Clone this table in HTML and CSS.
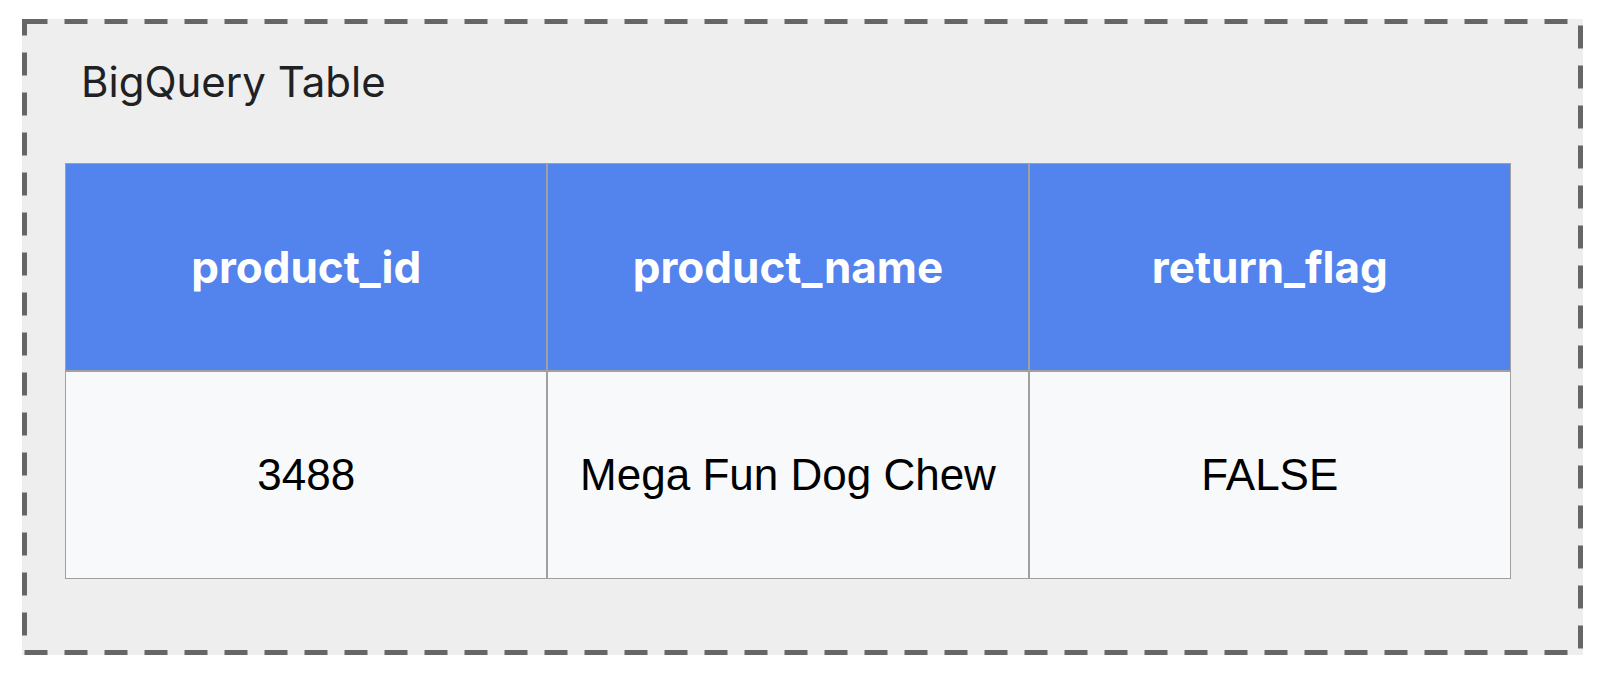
FILE: index.html
```html
<!DOCTYPE html>
<html>
<head>
<meta charset="utf-8">
<link rel="stylesheet" href="styles.css">
</head>
<body>
<div class="frame">
  <svg class="dash" width="1561" height="636" viewBox="0 0 1561 636">
    <rect x="2.5" y="2.5" width="1556" height="631" fill="none" stroke="#666666" stroke-width="5" stroke-dasharray="23 17"/>
  </svg>
  <div class="title">BigQuery Table</div>
  <div class="table">
    <div class="cell head">product_id</div>
    <div class="cell head">product_name</div>
    <div class="cell head">return_flag</div>
    <div class="cell body">3488</div>
    <div class="cell body">Mega Fun Dog Chew</div>
    <div class="cell body">FALSE</div>
  </div>
</div>
</body>
</html>
```
FILE: styles.css
```css
html, body {
  margin: 0;
  padding: 0;
  background: #ffffff;
}
.frame {
  position: relative;
  box-sizing: border-box;
  margin: 19px 0 0 22px;
  width: 1561px;
  height: 636px;
  background: #eeeeee;
  padding: 38px 0 0 43px;
}
.dash {
  position: absolute;
  left: 0;
  top: 0;
}
.title {
  font-family: Inter, Lato, sans-serif;
  font-weight: 400;
  font-size: 42px;
  line-height: 50px;
  color: #202124;
  padding-left: 16px;
  height: 106px;
}
.table {
  display: grid;
  grid-template-columns: repeat(3, 1fr);
  grid-template-rows: 206px 206px;
  width: 1446px;
  border: 1.5px solid #a0a0a0;
  box-sizing: border-box;
  background: #a0a0a0;
  gap: 1.5px;
}
.cell {
  display: flex;
  align-items: center;
  justify-content: center;
}
.head {
  background: #5383ec;
  color: #ffffff;
  font-family: Inter, Lato, sans-serif;
  font-weight: 700;
  font-size: 44px;
}
.body {
  background: #f8f9fa;
  color: #000000;
  font-family: "Liberation Sans", Arial, sans-serif;
  font-size: 44px;
}
```
